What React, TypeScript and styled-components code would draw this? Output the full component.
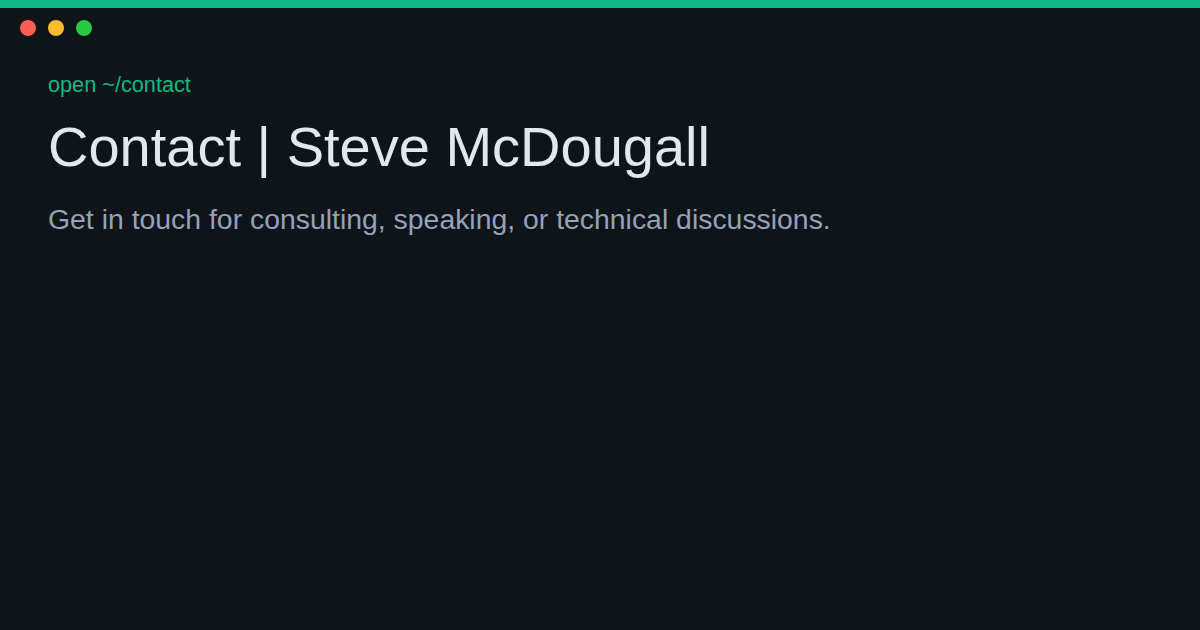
import React from "react";
import styled, { createGlobalStyle } from "styled-components";

const Global = createGlobalStyle`
  html, body { margin: 0; padding: 0; background: #0f1419; }
  body { font-family: "Liberation Sans", Arial, sans-serif; }
`;

const Frame = styled.div`
  width: 1200px;
  height: 630px;
  background: #0f1419;
  display: flex;
  flex-direction: column;
  overflow: hidden;
`;

const TopBar = styled.div`
  height: 8px;
  background: #10b981;
`;

const Dots = styled.div`
  display: flex;
  gap: 12px;
  padding: 12px 20px 0;
`;

const Dot = styled.span<{ $color: string }>`
  width: 16px;
  height: 16px;
  border-radius: 50%;
  background: ${(p) => p.$color};
`;

const Content = styled.div`
  display: flex;
  flex-direction: column;
  padding: 0 48px;
`;

const Prompt = styled.div`
  margin-top: 37.5px;
  color: #10b981;
  font-size: 21.7px;
  line-height: 1;
`;

const Title = styled.h1`
  margin: 24px 0 0;
  color: #e2e8f0;
  font-size: 56px;
  font-weight: 400;
  line-height: 1;
`;

const Subtitle = styled.p`
  margin: 30px 0 0;
  color: #94a3b8;
  font-size: 28.4px;
  line-height: 1;
`;

export default function App() {
  return (
    <>
      <Global />
      <Frame>
        <TopBar />
        <Dots>
          <Dot $color="#ff5f57" />
          <Dot $color="#febc2e" />
          <Dot $color="#28c840" />
        </Dots>
        <Content>
          <Prompt>open ~/contact</Prompt>
          <Title>Contact | Steve McDougall</Title>
          <Subtitle>Get in touch for consulting, speaking, or technical discussions.</Subtitle>
        </Content>
      </Frame>
    </>
  );
}
